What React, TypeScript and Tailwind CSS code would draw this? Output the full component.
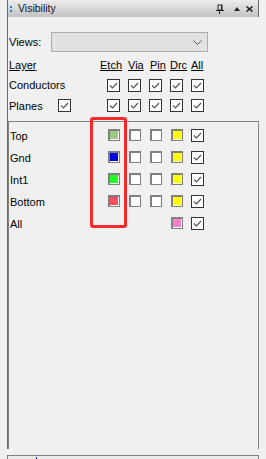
import React from 'react';

const font = { fontFamily: '"Liberation Sans", Arial, sans-serif' };

const Check: React.FC = () => (
  <div className="w-[13px] h-[13px] bg-white border border-[#333333] flex items-center justify-center shrink-0">
    <svg width="11" height="11" viewBox="0 0 11 11">
      <polyline points="2,5.5 4.5,8 9,3" fill="none" stroke="#555555" strokeWidth="1.2" />
    </svg>
  </div>
);

// sunken win32 style swatch
const Swatch: React.FC<{ color?: string }> = ({ color }) => (
  <div className="w-[12px] h-[12px] bg-[#808080] pt-[2px] pl-[2px] pr-[1px] pb-[1px] shrink-0">
    <div
      className={`w-full h-full border-r border-b border-white ${color ? '' : 'bg-white'}`}
      style={color ? { backgroundColor: color } : undefined}
    />
  </div>
);

const layers = [
  { name: 'Top', color: '#9fc97f' },
  { name: 'Gnd', color: '#0000dc' },
  { name: 'Int1', color: '#22ff22' },
  { name: 'Bottom', color: '#ff4f5c' },
];

export default function App() {
  return (
    <div className="w-[266px] h-[459px] bg-[#f0f0f0] relative overflow-hidden text-[11px] text-black" style={font}>
      <div className="ml-[7px] w-[252px] h-[449px] border-l border-[#6b6b6b] flex flex-col">
        {/* Title bar */}
        <div className="h-[17px] bg-gradient-to-b from-[#ededed] to-[#c2c2c2] border-r border-[#6b6b6b] flex items-center pr-[5px]">
          <div className="ml-[2px] flex flex-col gap-[2px]">
            <div className="w-[2px] h-[2px] bg-[#1e7fe0]" />
            <div className="w-[2px] h-[2px] bg-[#1e7fe0]" />
          </div>
          <span className="ml-[6px] text-[10.5px] text-[#14142e]">Visibility</span>
          <div className="ml-auto flex items-center">
            <svg width="8" height="10" viewBox="0 0 8 10" className="mr-[10px]">
              <rect x="2" y="1" width="4" height="5" fill="none" stroke="#222" strokeWidth="1" />
              <rect x="5" y="1" width="1" height="5" fill="#222" />
              <rect x="0" y="6" width="8" height="1" fill="#222" />
              <rect x="3" y="7" width="1" height="3" fill="#222" />
            </svg>
            <svg width="6" height="4" viewBox="0 0 6 4" className="mr-[6px]">
              <polygon points="0,4 6,4 3,0" fill="#222" />
            </svg>
            <svg width="7" height="6" viewBox="0 0 7 6">
              <path d="M0.5 0.5 L6.5 5.5 M6.5 0.5 L0.5 5.5" stroke="#222" strokeWidth="1.6" />
            </svg>
          </div>
        </div>

        {/* Views */}
        <div className="mt-[15px] h-[20px] flex items-center">
          <span className="ml-[1px] w-[42px]">Views:</span>
          <div className="w-[157px] h-[20px] bg-[#e2e2e2] border border-[#adadad] flex items-center justify-end pr-[5px]">
            <svg width="9" height="5" viewBox="0 0 9 5">
              <polyline points="0.5,0.5 4.5,4.5 8.5,0.5" fill="none" stroke="#555" strokeWidth="1" />
            </svg>
          </div>
        </div>

        {/* Header */}
        <div className="mt-[6px] h-[15px] flex items-center">
          <span className="ml-[1px] w-[91px] underline">Layer</span>
          <span className="w-[28px] underline">Etch</span>
          <span className="w-[22px] underline">Via</span>
          <span className="w-[20px] underline">Pin</span>
          <span className="w-[21px] underline">Drc</span>
          <span className="underline">All</span>
        </div>

        {/* Conductors */}
        <div className="mt-[3px] h-[19px] flex items-center">
          <span className="ml-[1px] w-[98px]">Conductors</span>
          <div className="flex gap-[8px]">
            <Check /><Check /><Check /><Check /><Check />
          </div>
        </div>

        {/* Planes */}
        <div className="h-[20px] flex items-center">
          <span className="ml-[1px] w-[49px] pt-[3px]">Planes</span>
          <Check />
          <div className="ml-[36px] flex gap-[8px]">
            <Check /><Check /><Check /><Check /><Check />
          </div>
        </div>

        {/* Layer frame */}
        <div className="mt-[6px] flex-1 border-t border-l border-r border-[#828282] pt-[2px]">
          {layers.map(l => (
            <div key={l.name} className="h-[22px] flex items-center">
              <span className="ml-[1px] w-[98px] pt-[3px]">{l.name}</span>
              <Swatch color={l.color} />
              <div className="ml-[9px]"><Swatch /></div>
              <div className="ml-[9px]"><Swatch /></div>
              <div className="ml-[9px]"><Swatch color="#ffff00" /></div>
              <div className="ml-[8px]"><Check /></div>
            </div>
          ))}
          <div className="h-[22px] flex items-center">
            <span className="ml-[1px] w-[161px] pt-[3px]">All</span>
            <Swatch color="#f57fc6" />
            <div className="ml-[8px]"><Check /></div>
          </div>
        </div>
      </div>
      <div className="ml-[7px] w-[2px] h-[1px] bg-[#6b6b6b] -mt-[1px]" />

      {/* bottom tab strip */}
      <div className="mt-[6px] ml-[7px] w-[252px] h-[4px] border-t border-l border-r border-[#808080] bg-[#eaeaea] relative">
        <div className="absolute left-[28px] top-[1px] w-[1px] h-[3px] bg-[#2a2a9a]" />
      </div>

      {/* red highlight annotation */}
      <div className="absolute left-[90px] top-[117px] w-[37px] h-[111px] border-[3px] border-[#f62a2a] rounded-[3px]" />
    </div>
  );
}
